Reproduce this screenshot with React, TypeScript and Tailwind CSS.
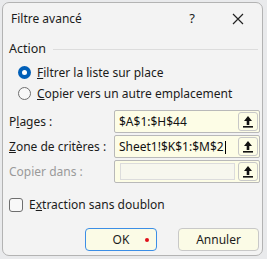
const font = { fontFamily: '"Noto Sans", "Open Sans", sans-serif' };

const PickIcon = () => (
  <svg width="12" height="13" viewBox="0 0 12 13">
    <path d="M6 1 L10 6 H7.3 V10 H4.7 V6 H2 Z" fill="#111" />
    <rect x="1" y="11" width="10" height="1.6" fill="#111" />
  </svg>
);

const RefField = ({ value, disabled, caret }: { value?: string; disabled?: boolean; caret?: boolean }) => (
  <div className="flex w-[146px] h-[23px] border border-[#b9b9b9] bg-[#fdfde6] rounded-[2px]">
    <div className="flex-1 flex items-center pl-[4px] text-[12px] text-[#111]">
      {disabled ? (
        <div className="w-[115px] h-[17px] border border-[#dcdcdc] bg-[#f7f7ee] ml-[1px]" />
      ) : (
        <span>
          {value}
          {caret && <span className="inline-block w-[1px] h-[13px] bg-black align-middle ml-[1px]" />}
        </span>
      )}
    </div>
    <div className="w-[20px] h-[19px] mt-[1px] mr-[1px] border border-[#c8c8c8] rounded-[3px] bg-[#fdfde6] flex items-center justify-center">
      <PickIcon />
    </div>
  </div>
);

export default function App() {
  return (
    <div className="w-[267px] h-[259px] bg-[#e9eaec] pl-[2px] pt-[2px]" style={font}>
      <div className="w-[261px] h-[254px] bg-[#f3f3f3] border border-[#b3b3b3] rounded-[7px] flex flex-col text-[12px] text-[#1b1b1b]">
        <div className="h-[30px] flex items-center pl-[8px] pt-[1px]">
          <span className="flex-1 text-[12px]">Filtre avancé</span>
          <span className="w-[20px] text-[13px] text-center mr-[30px]">?</span>
          <svg width="12" height="12" viewBox="0 0 12 12" className="mr-[18px]">
            <path d="M1 1 L11 11 M11 1 L1 11" stroke="#222" strokeWidth="1.2" />
          </svg>
        </div>
        <div className="flex items-center h-[20px] mt-[6px] pl-[6px] pr-[4px]">
          <span className="text-[12.5px]">Action</span>
          <div className="flex-1 h-[1px] bg-[#dcdcdc] ml-[7px]" />
        </div>
        <div className="flex flex-col pl-[15px] mt-[3px]">
          <div className="flex items-center h-[21px]">
            <div className="w-[13px] h-[13px] rounded-full bg-[#005fb8] flex items-center justify-center">
              <div className="w-[5px] h-[5px] rounded-full bg-white" />
            </div>
            <span className="ml-[6px]"><u>F</u>iltrer la liste sur place</span>
          </div>
          <div className="flex items-center h-[21px]">
            <div className="w-[13px] h-[13px] rounded-full border border-[#6e6e6e] bg-[#f8f8f8]" />
            <span className="ml-[6px]"><u>C</u>opier vers un autre emplacement</span>
          </div>
        </div>
        <div className="flex flex-col gap-[2px] mt-[6px] pl-[6px]">
          <div className="flex items-center">
            <span className="w-[105px]">P<u>l</u>ages :</span>
            <RefField value="$A$1:$H$44" />
          </div>
          <div className="flex items-center">
            <span className="w-[105px]"><u>Z</u>one de critères :</span>
            <RefField value="Sheet1!$K$1:$M$2" caret />
          </div>
          <div className="flex items-center">
            <span className="w-[105px] text-[#9a9a9a]">Copier dans :</span>
            <RefField disabled />
          </div>
        </div>
        <div className="flex items-center mt-[13px] pl-[6px]">
          <div className="w-[14px] h-[14px] border border-[#6e6e6e] rounded-[3px] bg-[#f8f8f8]" />
          <span className="ml-[6px]">E<u>x</u>traction sans doublon</span>
        </div>
        <div className="flex justify-end gap-[21px] mt-[14px] pr-[3px]">
          <div className="w-[72px] h-[23px] rounded-[4px] border-[1.5px] border-[#3c8ee6] bg-[#fbfbe6] flex items-center justify-center relative">
            <span>OK</span>
            <span className="absolute right-[7px] top-[9px] w-[4px] h-[4px] rounded-full bg-[#e0101a]" />
          </div>
          <div className="w-[81px] h-[23px] rounded-[4px] border border-[#c8c8c8] bg-[#fbfbe6] flex items-center justify-center">
            <span>Annuler</span>
          </div>
        </div>
      </div>
    </div>
  );
}
